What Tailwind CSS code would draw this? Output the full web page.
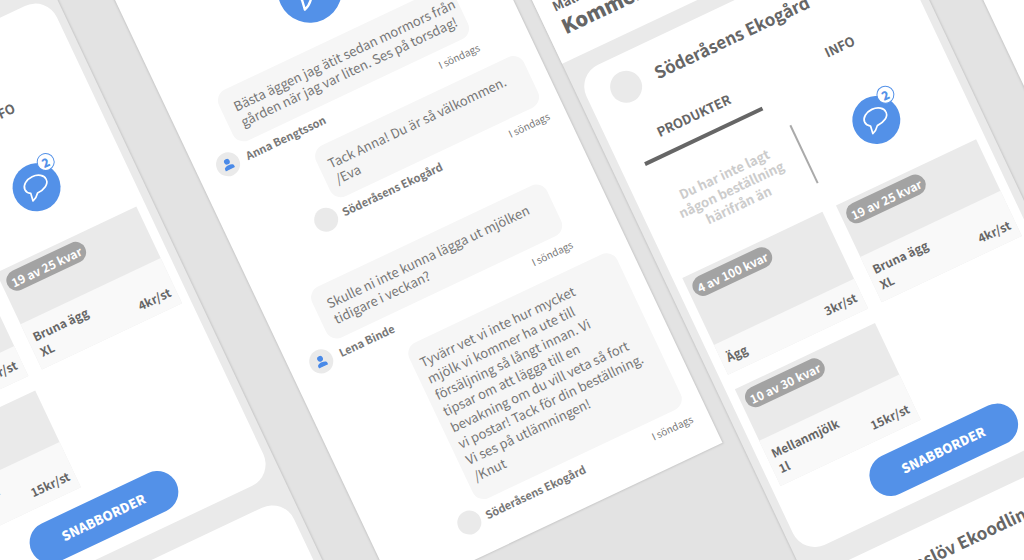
<!DOCTYPE html>
<html lang="sv">
<head>
<meta charset="utf-8">
<title>Ekogård</title>
<script src="https://cdn.jsdelivr.net/npm/@tailwindcss/browser@4"></script>
</head>
<body class="h-screen overflow-hidden bg-[#e3e3e3] font-['Noto_Sans_CJK_SC',sans-serif] text-[#666]">
<svg class="hidden">
  <symbol id="chat" viewBox="0 0 26 26"><path d="M5.200 16L4 23.800C7 23 9.500 21 11.500 18.500C19 18.500 25.200 15 25.200 10C25.200 5.300 20 1.500 13.500 1.500S1.500 5.300 1.500 10c0 2.400 1.400 4.500 3.700 6z" fill="none" stroke="#fff" stroke-width="1.700" stroke-linejoin="round"/></symbol>
  <symbol id="person" viewBox="0 0 12 12"><circle cx="6" cy="3.200" r="2.900" fill="#4a8ae8"/><path d="M1 11.500V9.500C1 7.800 4 7 6 7s5 .8 5 2.500v2z" fill="#4a8ae8"/></symbol>
</svg>
<div class="h-full origin-top-left -rotate-[25.3deg]">
  <div class="-ml-[307px] flex w-max items-start">

    <section class="-mt-[298px] w-[359px] bg-[#eaeaea] pb-20 shadow-[0_0_2px_1px_#c8c8c8]">
      <header class="h-[298px] bg-white"></header>
      <div class="flex flex-col gap-6 px-2 pt-4">
        <article class="rounded-3xl bg-white pt-4 pb-3.5">
          <div class="flex items-center gap-4 px-6"><span class="size-8 rounded-full bg-[#eaeaea]"></span><h2 class="text-[17px] leading-8 font-bold">Söderåsens Ekogård</h2></div>
          <div class="mt-5 grid grid-cols-2 gap-8 pr-7 pl-6 text-[13px] font-bold"><button class="h-11 border-b-4 border-[#666] pb-0.5">PRODUKTER</button><button class="h-11 border-b-4 border-transparent pb-0.5">INFO</button></div>
          <div class="mt-[25px] grid h-16 grid-cols-[1fr_2px_1fr] items-center gap-x-3 pr-6 pl-6">
            <p class="text-center text-[13px] leading-[17px] font-bold text-[#ccc]">Du har inte lagt<br>någon beställning<br>härifrån än</p>
            <span class="h-16 bg-[#aaa]"></span>
            <button aria-label="Meddelanden" class="relative mx-auto grid size-12 place-items-center rounded-full bg-[#5391e8]"><svg class="size-[26px]"><use href="#chat"/></svg><span class="absolute -top-1 -right-1 grid size-[18px] place-items-center rounded-full border border-[#5391e8] bg-white text-xs leading-3 font-black text-[#5391e8]">2</span></button>
          </div>
          <div class="mt-7 grid grid-cols-2 gap-x-[15px] gap-y-4 px-[9px] text-xs leading-[17px] font-bold">
            <div class="flex h-[107px] flex-col bg-[#eaeaea]"><div class="flex-1 p-[5px]"><span class="block w-[86px] rounded-full bg-[#a3a3a3] text-center leading-[21px] text-white">4 av 100 kvar</span></div><div class="flex items-end justify-between bg-[#f9f9f9] px-1.5 py-2"><span>Ägg</span><span>3kr/st</span></div></div>
            <div class="flex h-[107px] flex-col bg-[#eaeaea]"><div class="flex-1 p-[5px]"><span class="block w-[86px] rounded-full bg-[#a3a3a3] text-center leading-[21px] text-white">19 av 25 kvar</span></div><div class="flex items-end justify-between bg-[#f9f9f9] px-1.5 py-2"><span>Bruna ägg<br>XL</span><span>4kr/st</span></div></div>
            <div class="flex h-[107px] flex-col bg-[#eaeaea]"><div class="flex-1 p-[5px]"><span class="block w-[86px] rounded-full bg-[#a3a3a3] text-center leading-[21px] text-white">10 av 30 kvar</span></div><div class="flex items-end justify-between bg-[#f9f9f9] px-1.5 py-2"><span>Mellanmjölk<br>1l</span><span>15kr/st</span></div></div>
          </div>
          <button class="mx-auto mt-4 block h-[42px] w-40 rounded-full bg-[#5391e8] text-[13px] font-black text-white">SNABBORDER</button>
        </article>
        <article class="h-[530px] rounded-3xl bg-white"></article>
      </div>
    </section>

    <section class="ml-[52px] h-[709px] w-[360px] bg-white px-5 pt-[92px] text-[13px] leading-[17px] text-[#777] shadow-[0_0_2px_1px_#c8c8c8]">
      <button aria-label="Nytt meddelande" class="mx-auto grid size-16 place-items-center rounded-full bg-[#5391e8]"><svg class="size-9"><use href="#chat"/></svg></button>
      <div class="mt-[21px] mr-[31px] ml-[29px] rounded-xl bg-[#f6f6f6] py-[11px] pl-[13px]">Bästa äggen jag ätit sedan mormors från<br>gården när jag var liten. Ses på torsdag!</div>
      <div class="mt-px mr-[31px] flex h-6 items-center text-[11px]"><span class="mr-2 grid size-6 place-items-center rounded-full bg-[#eaeaea]"><svg class="size-3"><use href="#person"/></svg></span><b class="flex-1">Anna Bengtsson</b><span class="text-[10px]">I söndags</span></div>
      <div class="mt-[11px] -mr-[3px] ml-[93px] rounded-xl bg-[#f6f6f6] px-2.5 py-[11px]">Tack Anna! Du är så välkommen.<br>/Eva</div>
      <div class="mt-px -mr-[3px] ml-[65px] flex h-6 items-center text-[11px]"><span class="mr-1.5 size-6 rounded-full bg-[#eaeaea]"></span><b class="flex-1">Söderåsens Ekogård</b><span class="text-[10px]">I söndags</span></div>
      <div class="mt-[45px] mr-[31px] ml-[29px] rounded-xl bg-[#f6f6f6] px-[13px] py-[11px]">Skulle ni inte kunna lägga ut mjölken<br>tidigare i veckan?</div>
      <div class="mt-px mr-[31px] flex h-6 items-center text-[11px]"><span class="mr-2 grid size-6 place-items-center rounded-full bg-[#eaeaea]"><svg class="size-3"><use href="#person"/></svg></span><b class="flex-1">Lena Binde</b><span class="text-[10px]">I söndags</span></div>
      <div class="mt-[11px] -mr-[3px] ml-[93px] rounded-xl bg-[#f6f6f6] px-2 pt-3 pb-4 leading-[18px]">Tyvärr vet vi inte hur mycket<br>mjölk vi kommer ha ute till<br>försäljning så långt innan. Vi<br>tipsar om att lägga till en<br>bevakning om du vill veta så fort<br>vi postar! Tack för din beställning.<br>Vi ses på utlämningen!<br>/Knut</div>
      <div class="mt-0.5 -mr-[3px] ml-[65px] flex h-6 items-center text-[11px]"><span class="mr-1.5 size-6 rounded-full bg-[#eaeaea]"></span><b class="flex-1">Söderåsens Ekogård</b><span class="text-[10px]">I söndags</span></div>
    </section>

    <section class="ml-[17px] w-[359px] bg-[#eaeaea] pb-20 shadow-[0_0_2px_1px_#c8c8c8]">
      <header class="flex h-[298px] flex-col justify-end bg-white px-4 pb-[21px]"><p class="text-[13px] leading-5 font-bold">Malmö</p><h1 class="text-xl leading-6 font-black">Kommentarer</h1></header>
      <div class="flex flex-col gap-6 px-2 pt-4">
        <article class="rounded-3xl bg-white pt-4 pb-3.5">
          <div class="flex items-center gap-4 px-6"><span class="size-8 rounded-full bg-[#eaeaea]"></span><h2 class="text-[17px] leading-8 font-bold">Söderåsens Ekogård</h2></div>
          <div class="mt-5 grid grid-cols-2 gap-8 pr-7 pl-6 text-[13px] font-bold"><button class="h-11 border-b-4 border-[#666] pb-0.5">PRODUKTER</button><button class="h-11 border-b-4 border-transparent pb-0.5">INFO</button></div>
          <div class="mt-[25px] grid h-16 grid-cols-[1fr_2px_1fr] items-center gap-x-3 pr-6 pl-6">
            <p class="text-center text-[13px] leading-[17px] font-bold text-[#ccc]">Du har inte lagt<br>någon beställning<br>härifrån än</p>
            <span class="h-16 bg-[#aaa]"></span>
            <button aria-label="Meddelanden" class="relative mx-auto grid size-12 place-items-center rounded-full bg-[#5391e8]"><svg class="size-[26px]"><use href="#chat"/></svg><span class="absolute -top-1 -right-1 grid size-[18px] place-items-center rounded-full border border-[#5391e8] bg-white text-xs leading-3 font-black text-[#5391e8]">2</span></button>
          </div>
          <div class="mt-7 grid grid-cols-2 gap-x-[15px] gap-y-4 px-[9px] text-xs leading-[17px] font-bold">
            <div class="flex h-[107px] flex-col bg-[#eaeaea]"><div class="flex-1 p-[5px]"><span class="block w-[86px] rounded-full bg-[#a3a3a3] text-center leading-[21px] text-white">4 av 100 kvar</span></div><div class="flex items-end justify-between bg-[#f9f9f9] px-1.5 py-2"><span>Ägg</span><span>3kr/st</span></div></div>
            <div class="flex h-[107px] flex-col bg-[#eaeaea]"><div class="flex-1 p-[5px]"><span class="block w-[86px] rounded-full bg-[#a3a3a3] text-center leading-[21px] text-white">19 av 25 kvar</span></div><div class="flex items-end justify-between bg-[#f9f9f9] px-1.5 py-2"><span>Bruna ägg<br>XL</span><span>4kr/st</span></div></div>
            <div class="flex h-[107px] flex-col bg-[#eaeaea]"><div class="flex-1 p-[5px]"><span class="block w-[86px] rounded-full bg-[#a3a3a3] text-center leading-[21px] text-white">10 av 30 kvar</span></div><div class="flex items-end justify-between bg-[#f9f9f9] px-1.5 py-2"><span>Mellanmjölk<br>1l</span><span>15kr/st</span></div></div>
          </div>
          <button class="mx-auto mt-4 block h-[42px] w-40 rounded-full bg-[#5391e8] text-[13px] font-black text-white">SNABBORDER</button>
        </article>
        <article class="rounded-3xl bg-white pt-4 pb-80"><div class="flex items-center gap-4 px-6"><span class="size-8 rounded-full bg-[#eaeaea]"></span><h2 class="text-[17px] leading-8 font-bold">Önnslöv Ekoodling</h2></div></article>
      </div>
    </section>

    <section class="ml-[49px] h-[800px] w-[360px] bg-white shadow-[0_0_2px_1px_#c8c8c8]"></section>
  </div>
</div>
</body>
</html>
